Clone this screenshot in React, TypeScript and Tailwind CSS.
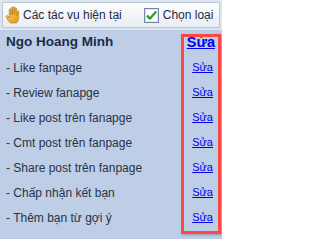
import React from 'react';

const tasks = [
  'Like fanpage',
  'Review fanapge',
  'Like post trên fanapge',
  'Cmt post trên fanpage',
  'Share post trên fanpage',
  'Chấp nhận kết bạn',
  'Thêm bạn từ gợi ý',
];

function HandIcon() {
  return (
    <svg width="17" height="18" viewBox="0 0 14 16.5">
      <defs>
        <linearGradient id="hand" x1="0" y1="0" x2="1" y2="1">
          <stop offset="0" stopColor="#FCD36A" />
          <stop offset="1" stopColor="#E09A1E" />
        </linearGradient>
      </defs>
      <path
        d="M5 15.5 C3.2 14 2 12 1.3 9.8 C1 8.8 2.3 8.3 2.9 9.2 L4 10.8 L4 3.4 C4 2.4 5.5 2.4 5.5 3.4 L5.5 8 L5.6 2 C5.6 0.9 7.2 0.9 7.2 2 L7.2 7.8 L7.4 1.4 C7.4 0.3 9 0.3 9 1.4 L9 7.8 L9.3 2.6 C9.3 1.5 10.9 1.5 10.9 2.6 L10.9 8.6 L11.3 5.2 C11.4 4.2 12.8 4.3 12.8 5.3 L12.6 11 C12.4 13.4 11.5 14.8 10.5 15.5 Z"
        fill="url(#hand)"
        stroke="#B9780F"
        strokeWidth="0.6"
        strokeLinejoin="round"
      />
    </svg>
  );
}

function CheckIcon() {
  return (
    <svg width="15" height="15" viewBox="0 0 15 15">
      <rect x="0.5" y="0.5" width="14" height="14" fill="#FFFFFF" stroke="#6E87A8" />
      <rect x="1.5" y="1.5" width="12" height="12" fill="none" stroke="#DDE5EF" />
      <path d="M3 7.6 L6 10.6 L12.2 3.6" fill="none" stroke="#2E9B2E" strokeWidth="2.3" strokeLinejoin="round" />
    </svg>
  );
}

export default function App() {
  return (
    <div
      className="relative h-[239px] w-[222px] overflow-hidden bg-[#BDCEE6] text-[12px]"
      style={{ fontFamily: '"Liberation Sans", Arial, sans-serif' }}
    >
      {/* ── Toolbar ── */}
      <div className="h-[30px] bg-[#DCE4EF] p-[2px]">
        <div className="flex h-full items-center rounded-[2px] border border-[#BCC5D2] bg-gradient-to-b from-[#FDFDFE] to-[#E8EDF4] pl-[1px] text-[#1E2A44]">
          <div className="flex items-center gap-[2px]">
            <HandIcon />
            <span>Các tác vụ hiện tại</span>
          </div>
          <div className="ml-[22px] flex items-center gap-[4px]">
            <CheckIcon />
            <span>Chọn loại</span>
          </div>
        </div>
      </div>

      {/* ── Task list ── */}
      <div className="flex flex-col">
        <div className="flex h-[25px] items-center justify-between pl-[6px] pr-[7px]">
          <span className="text-[13.5px] font-bold text-[#1C2B4C]">Ngo Hoang Minh</span>
          <a href="#" className="text-[14.5px] font-bold text-[#0000EE] underline">
            Sửa
          </a>
        </div>
        {tasks.map((task) => (
          <div key={task} className="flex h-[25px] items-center justify-between pl-[6px] pr-[9px]">
            <span className="text-[#283247]">- {task}</span>
            <a href="#" className="text-[11px] text-[#0000EE] underline">
              Sửa
            </a>
          </div>
        ))}
      </div>

      {/* highlight box */}
      <div className="absolute left-[181px] top-[34px] h-[200px] w-[40px] border-[3px] border-[#FF4646] shadow-[1px_1px_2px_rgba(0,0,0,0.25)]" />
    </div>
  );
}
